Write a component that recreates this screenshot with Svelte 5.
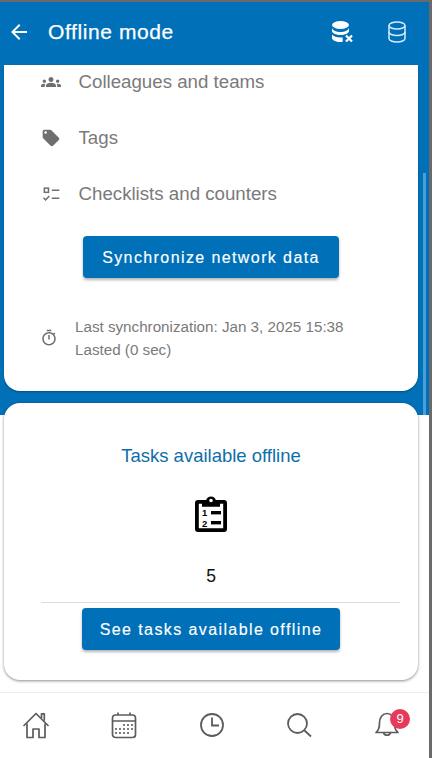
<script>
  const rows = [
    { label: 'Colleagues and teams', kind: 'people' },
    { label: 'Tags', kind: 'tag' },
    { label: 'Checklists and counters', kind: 'check' }
  ];
</script>

<div class="app">
  <header class="topbar">
    <svg class="back" viewBox="0 0 24 24" width="24" height="24"><path d="M20 11H7.830l5.590-5.590L12 4l-8 8 8 8 1.410-1.410L7.830 13H20v-2z" fill="#fff"/></svg>
    <h1>Offline mode</h1>
    <svg class="db-off" viewBox="0 0 24 24" width="24" height="24" fill="#fff">
      <ellipse cx="10.500" cy="5" rx="8.500" ry="4"/>
      <path d="M2 8c1 2.600 4.600 4 8.500 4s7.500-1.400 8.500-4v3.500c-.8 1.800-4 3.500-8.500 3.500S2.800 13.300 2 11.500z"/>
      <path d="M2 14.500c1.500 2 4.700 3 8.500 3 .8 0 1.500 0 2.200-.1v4.400c-.7.100-1.400.2-2.200.2-4.800 0-8.500-1.700-8.500-4z"/>
      <path d="M16 15.500l6 6m0-6l-6 6" stroke="#fff" stroke-width="2.200" fill="none"/>
    </svg>
    <svg class="db" viewBox="0 0 24 24" width="24" height="24" fill="none" stroke="#d6ecfa" stroke-width="1.500">
      <ellipse cx="12" cy="5.500" rx="8" ry="3.500"/>
      <path d="M4 5.500v13c0 2 3.600 3.500 8 3.500s8-1.500 8-3.500v-13"/>
      <path d="M4 12c0 2 3.600 3.500 8 3.500s8-1.500 8-3.500"/>
    </svg>
  </header>

  <main class="content">
    <section class="card first">
      <ul class="list">
        {#each rows as row}
          <li>
            <span class="row-icon">
              {#if row.kind === 'people'}
                <svg viewBox="0 0 24 24" width="20" height="20" fill="#6f6f6f"><path d="M12 12.750c1.630 0 3.070.390 4.240.900 1.080.480 1.760 1.560 1.760 2.730V18H6v-1.610c0-1.180.680-2.260 1.760-2.730 1.170-.520 2.610-.910 4.240-.910zM4 13c1.100 0 2-.900 2-2s-.900-2-2-2-2 .900-2 2 .900 2 2 2zm1.130 1.100c-.370-.060-.740-.100-1.130-.100-.990 0-1.930.210-2.780.580C.480 14.900 0 15.620 0 16.430V18h4.500v-1.610c0-.830.230-1.610.630-2.290zM20 13c1.100 0 2-.900 2-2s-.900-2-2-2-2 .900-2 2 .900 2 2 2zm4 3.430c0-.810-.480-1.530-1.220-1.850-.850-.370-1.790-.580-2.780-.580-.390 0-.760.040-1.130.100.400.680.630 1.460.630 2.290V18H24v-1.570zM12 6c1.660 0 3 1.340 3 3s-1.340 3-3 3-3-1.340-3-3 1.340-3 3-3z"/></svg>
              {:else if row.kind === 'tag'}
                <svg viewBox="0 0 24 24" width="20" height="20" fill="#6f6f6f"><path d="M21.410 11.580l-9-9C12.050 2.220 11.550 2 11 2H4c-1.100 0-2 .900-2 2v7c0 .550.220 1.050.590 1.420l9 9c.360.360.860.580 1.410.580.550 0 1.050-.220 1.410-.590l7-7c.370-.360.590-.860.590-1.410 0-.550-.230-1.060-.590-1.420zM5.500 7C4.670 7 4 6.330 4 5.500S4.670 4 5.500 4 7 4.670 7 5.500 6.330 7 5.500 7z"/></svg>
              {:else}
                <svg viewBox="0 0 24 24" width="20" height="20" fill="none" stroke="#6f6f6f" stroke-width="1.800">
                  <rect x="4" y="5" width="5" height="5"/>
                  <path d="M3 16.500l2.500 2.500 4.500-4.500M13 7.500h9M13 17h9"/>
                </svg>
              {/if}
            </span>
            <span>{row.label}</span>
          </li>
        {/each}
      </ul>

      <button class="action sync">Synchronize network data</button>

      <div class="last-sync">
        <svg viewBox="0 0 24 24" width="18" height="18" fill="#6f6f6f"><path d="M15 1H9v2h6V1zm-4 13h2V8h-2v6zm8.030-6.610 1.420-1.420c-.430-.510-.900-.990-1.410-1.410l-1.420 1.420C16.070 4.740 14.120 4 12 4c-4.970 0-9 4.030-9 9s4.020 9 9 9 9-4.030 9-9c0-2.120-.740-4.070-1.970-5.610zM12 20c-3.870 0-7-3.130-7-7s3.130-7 7-7 7 3.130 7 7-3.130 7-7 7z"/></svg>
        <p>Last synchronization: Jan 3, 2025 15:38<br />Lasted (0 sec)</p>
      </div>
    </section>

    <section class="card second">
      <h2>Tasks available offline</h2>
      <svg class="clip" viewBox="0 0 32 36" width="32" height="36">
        <path fill-rule="evenodd" d="M3 4h8.200a5 5 0 0 1 9.600 0H29a3 3 0 0 1 3 3v26a3 3 0 0 1-3 3H3a3 3 0 0 1-3-3V7a3 3 0 0 1 3-3zM3.800 7.800v24.400h24.400V7.800H25v3H7v-3zM16 2.700a1.800 1.800 0 1 0 0 3.600 1.800 1.800 0 0 0 0-3.600z"/>
        <text x="7" y="19.500" class="digit">1</text>
        <text x="7" y="30.500" class="digit">2</text>
        <rect x="16" y="15" width="10" height="3.400"/>
        <rect x="16" y="25" width="10" height="3.400"/>
      </svg>
      <div class="count">5</div>
      <hr />
      <button class="action see">See tasks available offline</button>
    </section>

    <div class="scrollbar"></div>
  </main>

  <nav class="tabs">
    <svg viewBox="0 0 28 28" width="28" height="28" fill="none" stroke="#5c5c5c" stroke-width="1.700" stroke-linejoin="round">
      <path d="M1.500 15L14 2.500 26.500 15"/>
      <path d="M19.500 7V2.800h2.800v7"/>
      <path d="M5 12.500V26.500h6V18h6v8.500h6V12.500"/>
    </svg>
    <svg viewBox="0 0 28 28" width="28" height="28" fill="none" stroke="#5c5c5c" stroke-width="1.700">
      <rect x="2.500" y="4" width="23" height="22.500" rx="3"/>
      <path d="M2.500 10h23M8 1.500V4M20 1.500V4"/>
      <g fill="#5c5c5c" stroke="none">
        <circle cx="14" cy="14" r="1.100"/><circle cx="18" cy="14" r="1.100"/><circle cx="22" cy="14" r="1.100"/>
        <circle cx="6" cy="18" r="1.100"/><circle cx="10" cy="18" r="1.100"/><circle cx="14" cy="18" r="1.100"/><circle cx="18" cy="18" r="1.100"/><circle cx="22" cy="18" r="1.100"/>
        <circle cx="6" cy="22" r="1.100"/><circle cx="10" cy="22" r="1.100"/><circle cx="14" cy="22" r="1.100"/><circle cx="18" cy="22" r="1.100"/>
      </g>
    </svg>
    <svg viewBox="0 0 28 28" width="28" height="28" fill="none" stroke="#5c5c5c" stroke-width="1.800">
      <circle cx="14" cy="14" r="11"/>
      <path d="M14 6.500V14.500H21"/>
    </svg>
    <svg viewBox="0 0 28 28" width="28" height="28" fill="none" stroke="#5c5c5c" stroke-width="1.800">
      <circle cx="12.500" cy="12.500" r="9.500"/>
      <path d="M19.500 19.500l6.500 6"/>
    </svg>
    <div class="bell">
      <svg viewBox="0 0 28 28" width="28" height="28" fill="none" stroke="#5c5c5c" stroke-width="1.700" stroke-linejoin="round">
        <path d="M3 21.500c2-2 3.500-3.500 3.500-9.500 0-5.500 3-9.500 7.500-9.500s7.500 4 7.500 9.500c0 6 1.500 7.500 3.500 9.500z"/>
        <path d="M10.500 21.500a3.600 3.600 0 0 0 7 0v.5"/>
      </svg>
      <span class="badge">9</span>
    </div>
  </nav>
</div>

<style>
  :global(body) {
    background: #6a6a6a;
    font-family: "Liberation Sans", Arial, sans-serif;
  }
  .app {
    width: 429px;
    height: 756px;
    margin-top: 2px;
    display: flex;
    flex-direction: column;
    background: #fff;
    overflow: hidden;
  }
  .topbar {
    height: 63px;
    flex: none;
    background: #0070b8;
    color: #fff;
    display: flex;
    align-items: center;
    padding-left: 7px;
    padding-bottom: 3px;
    box-sizing: border-box;
  }
  .topbar h1 {
    margin: 0 0 0 17px;
    font-size: 21px;
    font-weight: 400;
    letter-spacing: 0.6px;
    -webkit-text-stroke: 0.25px #fff;
    flex: 1;
  }
  .db-off { margin-right: 31px; }
  .db { margin-right: 20px; }

  .content {
    position: relative;
    height: 628px;
    flex: none;
    box-sizing: border-box;
    padding: 0 11px 0 4px;
    background: linear-gradient(#0070b8 350px, #fff 350px);
    border-bottom: 1px solid #ececec;
  }
  .card {
    background: #fff;
    box-sizing: border-box;
    overflow: hidden;
  }
  .first {
    height: 326px;
    border-radius: 0 0 16px 16px;
    box-shadow: 0 1px 2px rgba(0, 0, 0, 0.3);
  }
  .list {
    list-style: none;
    margin: -11px 0 0;
    padding: 0 0 0 37px;
  }
  .list li {
    height: 56px;
    display: flex;
    align-items: center;
    gap: 17.500px;
    font-size: 18.700px;
    color: #7a7a7a;
  }
  .row-icon {
    width: 20px;
    height: 20px;
    display: flex;
  }
  .action {
    display: block;
    height: 42px;
    border: none;
    border-radius: 4px;
    background: #0070b8;
    color: #fff;
    font: inherit;
    font-size: 16px;
    letter-spacing: 1.400px;
    -webkit-text-stroke: 0.15px #fff;
    box-shadow: 0 2px 3px rgba(0, 0, 0, 0.3);
    padding: 1px 0 0;
  }
  .sync {
    width: 256px;
    margin: 14px 0 0 79px;
  }
  .last-sync {
    display: flex;
    align-items: center;
    gap: 17px;
    margin: 37px 0 0 36px;
    color: #7a7a7a;
  }
  .last-sync p {
    margin: 0;
    font-size: 15.200px;
    line-height: 23px;
  }
  .second {
    margin-top: 12px;
    height: 277px;
    border-radius: 16px;
    padding-top: 42px;
    display: flex;
    flex-direction: column;
    align-items: center;
    box-shadow: 0 1px 3px rgba(0, 0, 0, 0.45);
  }
  .second h2 {
    margin: 0;
    font-size: 18.500px;
    line-height: 22px;
    font-weight: 400;
    color: #0d6ea8;
  }
  .clip {
    margin-top: 29px;
  }
  .digit {
    font-size: 9.500px;
    font-weight: 700;
    font-family: "Liberation Sans", Arial, sans-serif;
  }
  .count {
    margin-top: 34px;
    font-size: 17.500px;
    line-height: 20px;
    color: #111;
  }
  .second hr {
    align-self: stretch;
    margin: 16px 18px 5px 37px;
    border: none;
    border-top: 1px solid #dcdcdc;
  }
  .see { width: 258px; }
  .scrollbar {
    position: absolute;
    left: 423px;
    top: 108px;
    width: 3px;
    height: 242px;
    background: #4a9fd8;
  }

  .tabs {
    flex: 1;
    display: flex;
    justify-content: space-between;
    align-items: flex-start;
    padding: 18px 28px 0 22px;
  }
  .bell { position: relative; width: 28px; height: 28px; }
  .badge {
    position: absolute;
    left: 17px;
    top: -2px;
    width: 20px;
    height: 20px;
    border-radius: 50%;
    background: #e8395a;
    color: #fff;
    font-size: 13px;
    line-height: 20px;
    text-align: center;
  }
</style>
